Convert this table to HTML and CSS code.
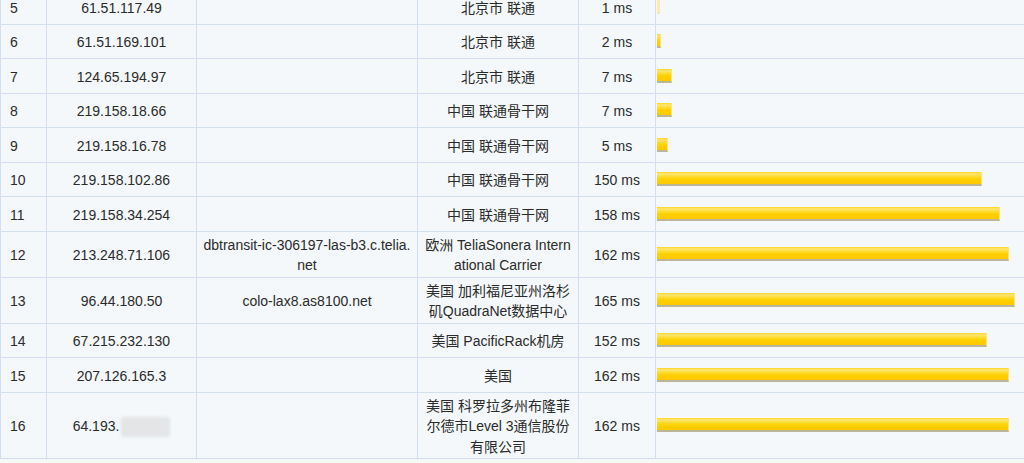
FILE: index.html
```html
<!DOCTYPE html>
<html lang="zh-CN">
<head>
    <meta charset="UTF-8">
    <meta name="viewport" content="width=device-width, initial-scale=1.0">
    <title>路由追踪结果</title>
    <link rel="stylesheet" href="styles.css">
</head>
<body>

    <!-- 路由追踪结果表 (从第5跳开始) -->
    <div class="trace-wrap">
        <table class="trace-table">
            <colgroup>
                <col class="col-hop">
                <col class="col-ip">
                <col class="col-host">
                <col class="col-loc">
                <col class="col-time">
                <col class="col-bar">
            </colgroup>
            <tbody>
                <tr>
                    <td class="hop">5</td>
                    <td>61.51.117.49</td>
                    <td></td>
                    <td>北京市 联通</td>
                    <td>1 ms</td>
                    <td class="bar-cell"><div class="bar bar-faint" style="width: 3px"></div></td>
                </tr>
                <tr>
                    <td class="hop">6</td>
                    <td>61.51.169.101</td>
                    <td></td>
                    <td>北京市 联通</td>
                    <td>2 ms</td>
                    <td class="bar-cell"><div class="bar" style="width: 4px"></div></td>
                </tr>
                <tr>
                    <td class="hop">7</td>
                    <td>124.65.194.97</td>
                    <td></td>
                    <td>北京市 联通</td>
                    <td>7 ms</td>
                    <td class="bar-cell"><div class="bar" style="width: 15px"></div></td>
                </tr>
                <tr>
                    <td class="hop">8</td>
                    <td>219.158.18.66</td>
                    <td></td>
                    <td>中国 联通骨干网</td>
                    <td>7 ms</td>
                    <td class="bar-cell"><div class="bar" style="width: 15px"></div></td>
                </tr>
                <tr>
                    <td class="hop">9</td>
                    <td>219.158.16.78</td>
                    <td></td>
                    <td>中国 联通骨干网</td>
                    <td>5 ms</td>
                    <td class="bar-cell"><div class="bar" style="width: 11px"></div></td>
                </tr>
                <tr>
                    <td class="hop">10</td>
                    <td>219.158.102.86</td>
                    <td></td>
                    <td>中国 联通骨干网</td>
                    <td>150 ms</td>
                    <td class="bar-cell"><div class="bar" style="width: 325px"></div></td>
                </tr>
                <tr>
                    <td class="hop">11</td>
                    <td>219.158.34.254</td>
                    <td></td>
                    <td>中国 联通骨干网</td>
                    <td>158 ms</td>
                    <td class="bar-cell"><div class="bar" style="width: 343px"></div></td>
                </tr>
                <tr>
                    <td class="hop">12</td>
                    <td>213.248.71.106</td>
                    <td>dbtransit-ic-306197-las-b3.c.telia.<br>net</td>
                    <td>欧洲 TeliaSonera Intern<br>ational Carrier</td>
                    <td>162 ms</td>
                    <td class="bar-cell"><div class="bar" style="width: 352px"></div></td>
                </tr>
                <tr>
                    <td class="hop">13</td>
                    <td>96.44.180.50</td>
                    <td>colo-lax8.as8100.net</td>
                    <td>美国 加利福尼亚州洛杉<br>矶QuadraNet数据中心</td>
                    <td>165 ms</td>
                    <td class="bar-cell"><div class="bar" style="width: 358px"></div></td>
                </tr>
                <tr>
                    <td class="hop">14</td>
                    <td>67.215.232.130</td>
                    <td></td>
                    <td>美国 PacificRack机房</td>
                    <td>152 ms</td>
                    <td class="bar-cell"><div class="bar" style="width: 330px"></div></td>
                </tr>
                <tr>
                    <td class="hop">15</td>
                    <td>207.126.165.3</td>
                    <td></td>
                    <td>美国</td>
                    <td>162 ms</td>
                    <td class="bar-cell"><div class="bar" style="width: 352px"></div></td>
                </tr>
                <tr>
                    <td class="hop">16</td>
                    <td>64.193.<span class="masked"></span></td>
                    <td></td>
                    <td>美国 科罗拉多州布隆菲<br>尔德市Level 3通信股份<br>有限公司</td>
                    <td>162 ms</td>
                    <td class="bar-cell"><div class="bar" style="width: 352px"></div></td>
                </tr>
            </tbody>
        </table>
    </div>

</body>
</html>
```

FILE: styles.css
```css
/* 基本页面样式 */
body {
    margin: 0;
    background-color: #f4f8fa;
    color: #2b2b2b;
    font-family: "Liberation Sans", "Noto Sans CJK SC", sans-serif;
    font-size: 14px;
    overflow: hidden;
}

/* 表格从第5跳中间截断 */
.trace-wrap {
    margin-top: -11px;
    width: 1040px;
}

.trace-table {
    border-collapse: collapse;
    table-layout: fixed;
    width: 1040px;
}

.col-hop  { width: 46px; }
.col-ip   { width: 150px; }
.col-host { width: 221px; }
.col-loc  { width: 161px; }
.col-time { width: 77px; }

.trace-table tr { height: 34.5px; }

.trace-table td {
    border: 1px solid #d3dfee;
    padding: 3px 2px 1px;
    line-height: 20.5px;
    text-align: center;
    vertical-align: middle;
    white-space: nowrap;
}

.trace-table td.hop {
    text-align: left;
    padding-left: 9px;
}

/* --- 延迟柱状条 --- */
.trace-table td.bar-cell {
    text-align: left;
    padding: 2px 2px 2px 1px;
}

.bar {
    height: 14px;
    background: linear-gradient(to bottom, #ffd51f 0, #ffe677 2px, #ffde3c 4px, #ffd000 7px, #ffc800 100%);
    border-bottom: 2px solid #bcb596;
    border-right: 1px solid #ffe27a;
    box-sizing: border-box;
}
.bar-faint {
    background: #ffeaa6;
    border-bottom-color: #ebe5cb;
    border-right: none;
}

/* 已打码的IP部分 */
.masked {
    display: inline-block;
    width: 49px;
    height: 20px;
    margin-left: 2px;
    vertical-align: middle;
    background-color: #e3e5e7;
    border-radius: 3px;
    filter: blur(1.5px);
}
```
